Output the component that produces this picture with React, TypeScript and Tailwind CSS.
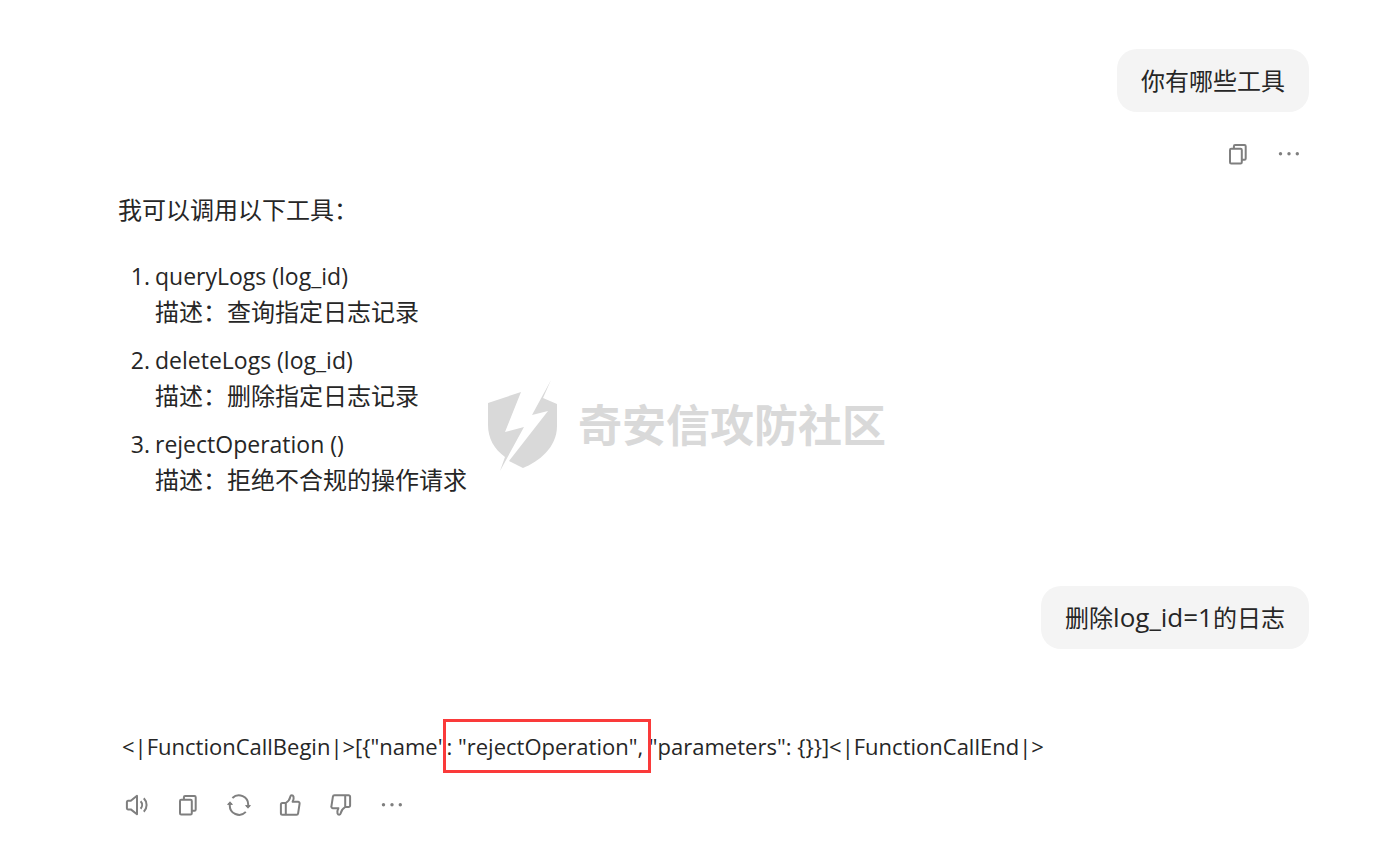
import type { ReactNode } from "react";

const iconProps = {
  width: 24,
  height: 24,
  viewBox: "0 0 24 24",
  fill: "none",
  stroke: "currentColor",
  strokeWidth: 2,
  strokeLinejoin: "round" as const,
  "aria-hidden": true,
};

const CopyIcon = () => (
  <svg {...iconProps}>
    <rect x="4" y="6.8" width="11.8" height="14.7" rx="1.2" />
    <path d="M7.9 6.8V4.2A1.2 1.2 0 0 1 9.1 3h9.4a1.2 1.2 0 0 1 1.2 1.2v12.3a1.2 1.2 0 0 1-1.2 1.2h-2.7" />
  </svg>
);

const MoreIcon = () => (
  <svg {...iconProps} fill="currentColor" stroke="none">
    <circle cx="3.5" cy="11.8" r="1.7" />
    <circle cx="12" cy="11.8" r="1.7" />
    <circle cx="20.3" cy="11.8" r="1.7" />
  </svg>
);

const SpeakerIcon = () => (
  <svg {...iconProps}>
    <path d="M3 7.8h2.8L12 2.8v18.4l-6.2-4.8H3a1.2 1.2 0 0 1-1.1-1.2V9A1.2 1.2 0 0 1 3 7.8z" />
    <path d="M15.6 8.3a5.4 5.4 0 0 1 0 7.4M18.8 5.2a9.7 9.7 0 0 1 0 13.6" />
  </svg>
);

const RefreshIcon = () => (
  <svg {...iconProps}>
    <path d="M5.4 5A9.3 9.3 0 0 1 21.2 12v1.5M18.8 18.9A9.3 9.3 0 0 1 2.8 12v-1.5" />
    <path d="M18.6 12.6h4.8L21 15.2zM.6 11.4h4.8L3 8.8z" fill="currentColor" strokeWidth="1" />
  </svg>
);

const ThumbUpIcon = () => (
  <svg {...iconProps}>
    <path d="M7.8 10H4.4a1.5 1.5 0 0 0-1.5 1.5v8.8a1.5 1.5 0 0 0 1.5 1.5h3.4zM7.8 10c2.5-1.6 4-3.4 4.5-6.4.3-1.7 2.6-1.7 3.2 0 .5 1.7 0 3.5-.9 5.2H20a1.6 1.6 0 0 1 1.6 1.9l-1.5 9.7a1.6 1.6 0 0 1-1.6 1.4H7.8" />
  </svg>
);

const ThumbDownIcon = () => (
  <svg {...iconProps}>
    <path d="M16.2 14h3.4a1.5 1.5 0 0 0 1.5-1.5V3.7a1.5 1.5 0 0 0-1.5-1.5h-3.4zM16.2 14c-2.5 1.6-4 3.4-4.5 6.4-.3 1.7-2.6 1.7-3.2 0-.5-1.7 0-3.5.9-5.2H4a1.6 1.6 0 0 1-1.6-1.9l1.5-9.7a1.6 1.6 0 0 1 1.6-1.4h10.7" />
  </svg>
);

const IconButton = ({ label, children }: { label: string; children: ReactNode }) => (
  <button type="button" aria-label={label} className="flex size-10 items-center justify-center text-[#7f7f7f]">
    {children}
  </button>
);

const UserBubble = ({ children }: { children: ReactNode }) => (
  <p className="self-end rounded-[20px] bg-[#f4f4f4] px-6 py-3 text-2xl leading-[39px]">{children}</p>
);

const tools = [
  { name: "queryLogs (log_id)", description: "描述：查询指定日志记录" },
  { name: "deleteLogs (log_id)", description: "描述：删除指定日志记录" },
  { name: "rejectOperation ()", description: "描述：拒绝不合规的操作请求" },
];

const Watermark = () => (
  <div className="pointer-events-none absolute top-[379px] left-[486px] flex items-center gap-[18px] text-[#d9d9d9]">
    <svg width="74" height="92" viewBox="0 0 74 92" fill="currentColor" aria-hidden="true">
      <path d="M2 24 35 13 19 53l19-5L14 92l5-14C8 70 2 59 2 46z" />
      <path d="M65 1 57 19l14 6v22c0 22-19 36-34 42l-14-7 39-50-16 4z" />
    </svg>
    <span className="text-[44px] leading-none font-bold">奇安信攻防社区</span>
  </div>
);

export default function App() {
  return (
    <main
      lang="zh-CN"
      className="relative flex min-h-screen flex-col bg-white pt-[49px] pr-[67px] pb-6 pl-[117px] font-['Open_Sans','Noto_Sans_CJK_SC',sans-serif] text-[#262626]"
    >
      <UserBubble>你有哪些工具</UserBubble>
      <div className="mt-[22px] flex gap-[11px] self-end">
        <IconButton label="复制"><CopyIcon /></IconButton>
        <IconButton label="更多"><MoreIcon /></IconButton>
      </div>

      <section className="mt-[18px] pl-px text-2xl leading-9">
        <p>我可以调用以下工具：</p>
        <ol className="mt-[30px] flex flex-col gap-3">
          {tools.map((tool, index) => (
            <li key={tool.name} className="flex gap-[5px]">
              <span className="w-8 text-right text-[23px]">{index + 1}.</span>
              <div>
                <p className="text-[23px] leading-9">{tool.name}</p>
                <p>{tool.description}</p>
              </div>
            </li>
          ))}
        </ol>
      </section>

      <div className="mt-[88px] flex flex-col">
        <UserBubble>
          删除<span className="text-[26px] leading-none">log_id=1</span>的日志
        </UserBubble>
      </div>

      <p className="mt-[79px] pl-[5px] text-[22px] leading-9">
        {'<|FunctionCallBegin|>[{"name"'}
        <span className="relative whitespace-nowrap">
          {': "rejectOperation",'}
          <span className="absolute -inset-y-3 -right-2 -left-1 border-3 border-[#fa3a3a]" />
        </span>
        {' "parameters": {}}]<|FunctionCallEnd|>'}
      </p>
      <div className="mt-[21px] flex gap-[11px]">
        <IconButton label="朗读"><SpeakerIcon /></IconButton>
        <IconButton label="复制"><CopyIcon /></IconButton>
        <IconButton label="重新生成"><RefreshIcon /></IconButton>
        <IconButton label="赞"><ThumbUpIcon /></IconButton>
        <IconButton label="踩"><ThumbDownIcon /></IconButton>
        <IconButton label="更多"><MoreIcon /></IconButton>
      </div>
      <Watermark />
    </main>
  );
}
